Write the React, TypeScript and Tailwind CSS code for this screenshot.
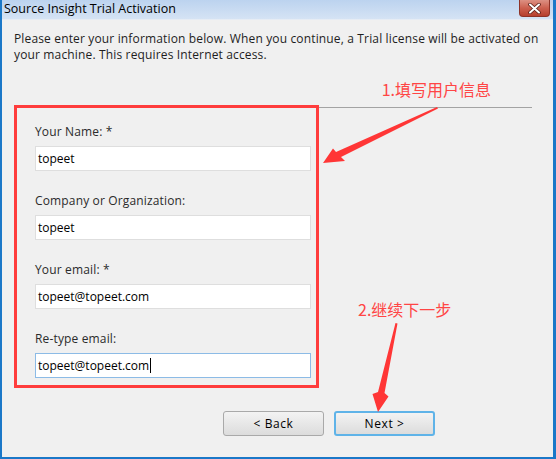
const fields = [
  { label: "Your Name: *", value: "topeet" },
  { label: "Company or Organization:", value: "topeet" },
  { label: "Your email: *", value: "topeet@topeet.com" },
  { label: "Re-type email:", value: "topeet@topeet.com", focused: true },
];

const CloseButton = () => (
  <div className="mr-[3px] flex h-[17px] w-[31px] items-center justify-center rounded-b-[4px] border border-t-0 border-[#8e3328] bg-gradient-to-b from-[#dc9083] via-[#cc604f] to-[#b63f2e]">
    <svg width="13" height="11" viewBox="0 0 13 11">
      <path d="M2 1.5 L11 9.5 M11 1.5 L2 9.5" stroke="#5a1f18" strokeWidth="3.6" strokeLinecap="round" />
      <path d="M2 1.5 L11 9.5 M11 1.5 L2 9.5" stroke="#ffffff" strokeWidth="2" strokeLinecap="round" />
    </svg>
  </div>
);

const Field = ({ label, value, focused }: { label: string; value: string; focused?: boolean }) => (
  <div className="flex flex-col">
    <div className="h-4 leading-4 tracking-[0.15px] text-[#2b2b2b]">{label}</div>
    <div
      className={`mt-[6px] flex h-[25px] w-[276px] items-center border bg-white pl-[2px] text-black ${
        focused ? "border-[#8cbbe6]" : "border-[#dedede]"
      }`}
    >
      {value}
      {focused && <span className="ml-[1px] inline-block h-[15px] w-px bg-black" />}
    </div>
  </div>
);

const Button = ({ children, primary }: { children: string; primary?: boolean }) => (
  <div
    className={`flex h-[25px] w-[101px] items-center justify-center rounded-[3px] bg-gradient-to-b from-[#f3f3f3] to-[#dcdcdc] tracking-[0.6px] text-black ${
      primary ? "border-2 border-[#5fb3e8]" : "border border-[#a9a9a9]"
    }`}
  >
    {children}
  </div>
);

const Arrows = () => (
  <svg className="pointer-events-none absolute inset-0" width="556" height="459" viewBox="0 0 556 459">
    <polygon
      points="437,107 438,108.5 341,157 345,161 323,163 333,148.5 336,152"
      fill="#ff3636"
    />
    <polygon
      points="395.5,323 397.5,323.5 384.5,393 388.5,396.5 378,412 372.5,394 378,392"
      fill="#ff3636"
    />
  </svg>
);

export default function App() {
  return (
    <div className="relative h-[459px] w-[556px] overflow-hidden font-['Open_Sans','Liberation_Sans',sans-serif] text-[12px]">
      <div className="flex h-full flex-col border-b-2 border-l-2 border-r-[3px] border-[#1b78c8] bg-[#f0f0f0]">
        <div className="flex h-[19px] shrink-0 items-start justify-between bg-gradient-to-b from-[#bcd3ef] to-[#d5e3f4]">
          <span className="pl-[2px] pt-[1px] text-[12.5px] leading-[16px] text-black">Source Insight Trial Activation</span>
          <CloseButton />
        </div>

        <div className="flex flex-1 flex-col border-t border-[#e6ecf4] pl-[12px]">
          <p className="mt-[11px] whitespace-nowrap leading-4 tracking-[0.15px] text-[#1e1e1e]">
            Please enter your information below. When you continue, a Trial license will be activated on
            <br />
            your machine. This requires Internet access.
          </p>

          <div className="relative mt-[17px] flex h-[18px] items-start justify-end pr-[62px]">
            <span className="font-['Noto_Sans_CJK_SC',sans-serif] text-[16px] leading-[18px] text-[#ff4545]">
              1.填写用户信息
            </span>
          </div>
          <div className="mt-[9px] h-px w-[518px] bg-[#a3a3a3]" />

          <div className="-mt-[3px] flex w-[305px] flex-col gap-[22px] border-[3px] border-[#ff3d3d] pb-[7px] pl-[18px] pt-[16px]">
            {fields.map((f) => (
              <Field key={f.label} {...f} />
            ))}
          </div>

          <div className="mt-[23px] flex justify-start gap-[10px] pl-[209px]">
            <Button>{"< Back"}</Button>
            <Button primary>{"Next >"}</Button>
          </div>
        </div>
      </div>

      <span className="absolute left-[358px] top-[300px] font-['Noto_Sans_CJK_SC',sans-serif] text-[16px] leading-[18px] text-[#ff4545]">
        2.继续下一步
      </span>
      <Arrows />
    </div>
  );
}
